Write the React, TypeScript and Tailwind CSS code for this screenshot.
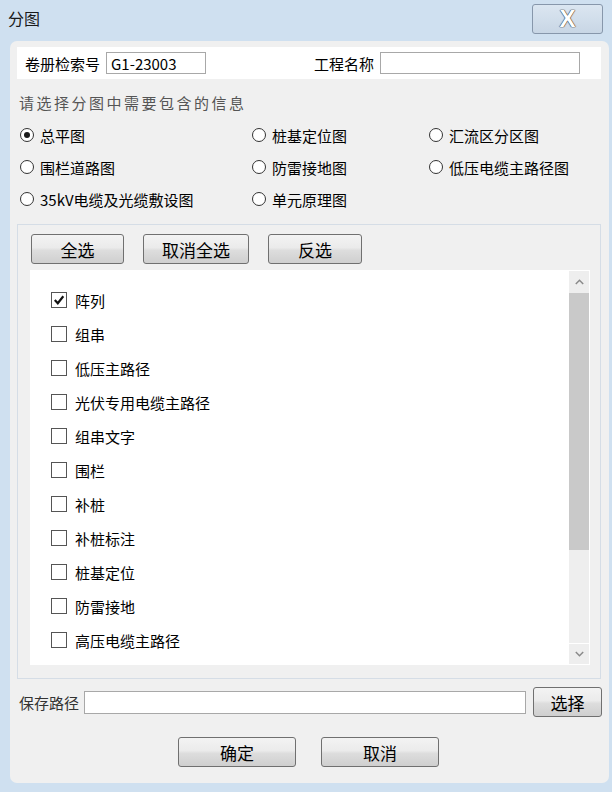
import React from "react";

const FONT = "font-['Noto_Sans_CJK_SC',sans-serif]";
const BTN =
  "flex items-center justify-center h-[30px] shrink-0 rounded-[3px] border border-[#707070] bg-[linear-gradient(#f3f3f3,#ebebeb_45%,#dddddd_55%,#cfcfcf)] text-[17px] text-black leading-none";

function Radio({ label, checked }: { label: string; checked?: boolean }) {
  return (
    <div className="flex items-center gap-[6px]">
      <span className="w-[14px] h-[14px] rounded-full border border-[#333] bg-white flex items-center justify-center">
        {checked && <span className="w-[6px] h-[6px] rounded-full bg-[#1a1a1a]" />}
      </span>
      <span className="text-[15px] leading-none text-black">{label}</span>
    </div>
  );
}

function Check({ label, checked }: { label: string; checked?: boolean }) {
  return (
    <div className="h-[34px] flex items-center gap-[8px] shrink-0">
      <span className="w-[16px] h-[16px] border border-[#555] bg-white flex items-center justify-center">
        {checked && (
          <svg width="12" height="12" viewBox="0 0 12 12">
            <path d="M1.8 6 L4.8 9.2 L10.3 2.3" fill="none" stroke="#111" strokeWidth="2.2" />
          </svg>
        )}
      </span>
      <span className="text-[15px] leading-none text-black">{label}</span>
    </div>
  );
}

export default function App() {
  const items = [
    "阵列",
    "组串",
    "低压主路径",
    "光伏专用电缆主路径",
    "组串文字",
    "围栏",
    "补桩",
    "补桩标注",
    "桩基定位",
    "防雷接地",
    "高压电缆主路径",
  ];
  return (
    <div className={`w-[612px] h-[792px] bg-[#cfe0f0] flex flex-col ${FONT}`}>
      {/* title bar */}
      <div className="h-[41px] flex items-start justify-between pl-[8px] pr-[9px]">
        <span className="mt-[10px] text-[16px] leading-none text-[#1a1a1a]">分图</span>
        <div className="mt-[4px] w-[71px] h-[30px] rounded-[3px] border border-[#8797ab] bg-[linear-gradient(#dbe6f1,#c8d6e5)] flex items-center justify-center">
          <span className="font-['Liberation_Sans',sans-serif] font-bold text-[24px] leading-none text-white [text-shadow:0_0_1px_#333,0_0_1px_#333,0_0_1px_#555]">
            X
          </span>
        </div>
      </div>

      {/* main panel */}
      <div className="ml-[10px] mr-[3px] h-[742px] rounded-[7px] bg-[#f0f0f0] pt-[6px] pl-[7px] pr-[8px] flex flex-col">
        {/* top white row */}
        <div className="h-[32px] bg-white flex items-center">
          <span className="ml-[8px] text-[15px] leading-none text-black">卷册检索号</span>
          <div className="ml-[6px] w-[100px] h-[22px] border border-[#a8a8a8] flex items-center pl-[4px] text-[15px] leading-none text-black">
            G1-23003
          </div>
          <span className="ml-[108px] text-[15px] leading-none text-black">工程名称</span>
          <div className="ml-[6px] w-[200px] h-[22px] border border-[#a8a8a8] bg-white" />
        </div>

        {/* prompt */}
        <div className="h-[40px] pt-[6px] flex items-center pl-[2px]">
          <span className="text-[15px] leading-none tracking-[2.5px] text-[#555]">请选择分图中需要包含的信息</span>
        </div>

        {/* radio grid */}
        <div className="grid grid-cols-[232px_177px_1fr] pl-[3px]">
          {[
            ["总平图", true],
            ["桩基定位图"],
            ["汇流区分区图"],
            ["围栏道路图"],
            ["防雷接地图"],
            ["低压电缆主路径图"],
            ["35kV电缆及光缆敷设图"],
            ["单元原理图"],
          ].map(([l, c], i) => (
            <div key={i} className="h-[32px] flex items-center">
              <Radio label={l as string} checked={!!c} />
            </div>
          ))}
        </div>

        {/* group box */}
        <div className="mt-[9px] h-[455px] border border-[#d5dde6] pl-[12px] pr-[10px] pt-[9px] flex flex-col">
          <div className="flex items-center gap-[19px] ml-[1px]">
            <div className={`${BTN} w-[93px]`}>全选</div>
            <div className={`${BTN} w-[106px]`}>取消全选</div>
            <div className={`${BTN} w-[94px]`}>反选</div>
          </div>
          <div className="mt-[6px] h-[395px] bg-white flex overflow-hidden">
            <div className="flex-1 pl-[21px] pt-[13px] flex flex-col overflow-hidden">
              {items.map((t, i) => (
                <Check key={t} label={t} checked={i === 0} />
              ))}
            </div>
            {/* scrollbar */}
            <div className="w-[21px] py-[1px] pr-[1px] flex flex-col">
              <div className="h-[22px] bg-[#eeeeee] flex items-center justify-center">
                <svg width="9" height="6" viewBox="0 0 9 6">
                  <path d="M0.8 5 L4.5 1.3 L8.2 5" fill="none" stroke="#8a8a8a" strokeWidth="1.5" />
                </svg>
              </div>
              <div className="h-[257px] bg-[#c9c9c9]" />
              <div className="flex-1 bg-[#eeeeee]" />
              <div className="h-[21px] bg-[#eeeeee] flex items-center justify-center border-t border-white">
                <svg width="9" height="6" viewBox="0 0 9 6">
                  <path d="M0.8 1 L4.5 4.7 L8.2 1" fill="none" stroke="#8a8a8a" strokeWidth="1.5" />
                </svg>
              </div>
            </div>
          </div>
        </div>

        {/* save path */}
        <div className="mt-[8px] h-[30px] flex items-center">
          <span className="ml-[2px] shrink-0 whitespace-nowrap text-[15px] leading-none text-[#333]">保存路径</span>
          <div className="ml-[5px] w-[442px] shrink-0 h-[23px] border border-[#a8a8a8] bg-white" />
          <div className={`${BTN} ml-[7px] w-[69px]`}>选择</div>
        </div>

        {/* ok cancel */}
        <div className="mt-[20px] flex justify-center gap-[25px] pr-[1px]">
          <div className={`${BTN} w-[118px]`}>确定</div>
          <div className={`${BTN} w-[118px]`}>取消</div>
        </div>
      </div>
    </div>
  );
}
